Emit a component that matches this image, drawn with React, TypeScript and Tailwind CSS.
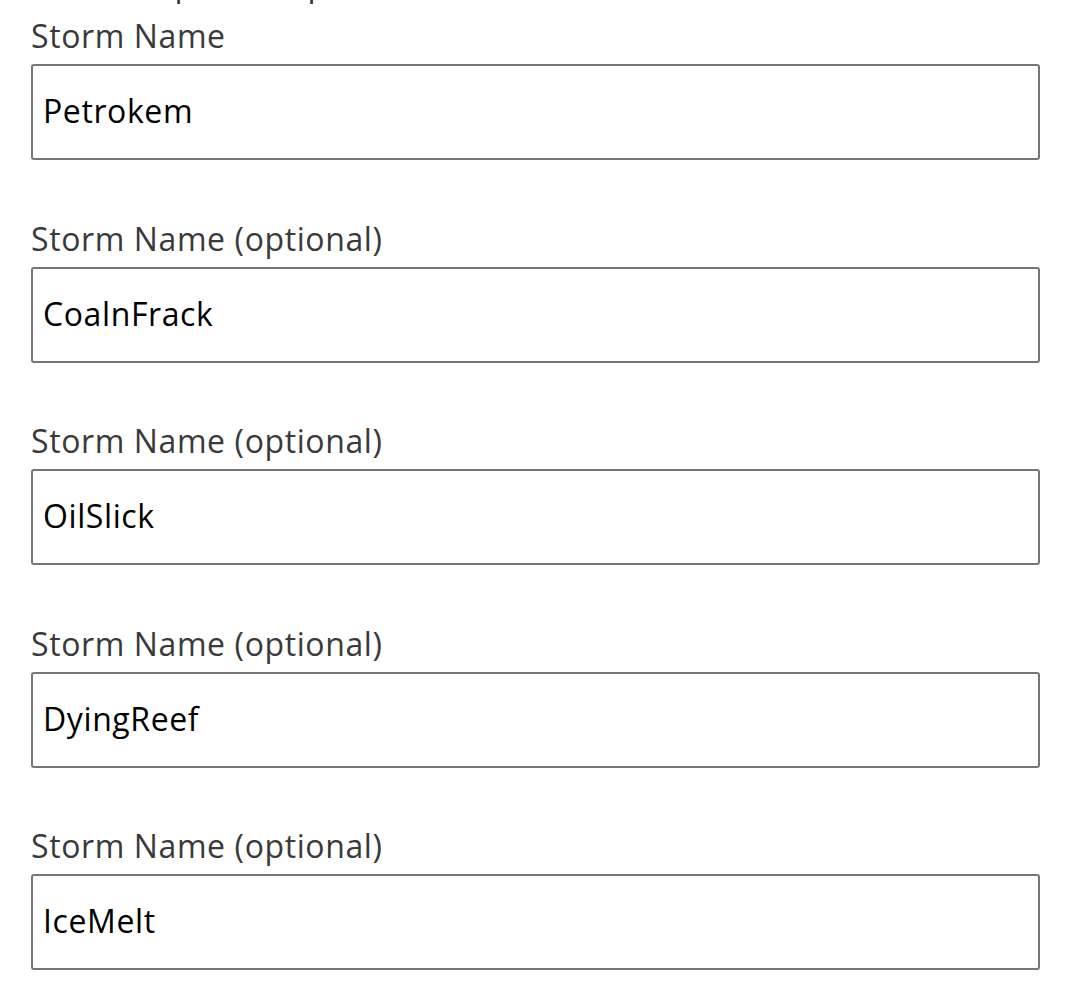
import React, { useState } from 'react';

const initialNames = ['Petrokem', 'CoalnFrack', 'OilSlick', 'DyingReef', 'IceMelt'];

export default function App() {
  const [names, setNames] = useState<string[]>(initialNames);

  const update = (i: number, value: string) => {
    setNames((prev) => prev.map((n, idx) => (idx === i ? value : n)));
  };

  return (
    <div className="min-h-screen bg-white font-['Open_Sans',sans-serif] overflow-hidden">
      <div className="pl-[31px] pr-[30px]">
        {/* heading that is scrolled mostly out of view */}
        <p className="mt-[-34px] mb-[16px] h-[36px] text-[32px] leading-[36px] tracking-[0.5px] text-[#333]">
          Choose up to five possible storm names
        </p>
        {names.map((name, i) => (
          <div key={i} className="mb-[60.5px]">
            <label
              htmlFor={`storm-${i}`}
              className="block h-[36px] text-[32px] leading-[36px] tracking-[0.6px] text-[#3a3a3a] mb-[10px]"
            >
              {i === 0 ? 'Storm Name' : 'Storm Name (optional)'}
            </label>
            <input
              id={`storm-${i}`}
              type="text"
              value={name}
              onChange={(e) => update(i, e.target.value)}
              className="block w-full h-[96px] px-[10px] pb-[3px] rounded-[3px] border-2 border-[#767676] bg-white text-[32px] tracking-[0.6px] text-black outline-none"
            />
          </div>
        ))}
      </div>
    </div>
  );
}
